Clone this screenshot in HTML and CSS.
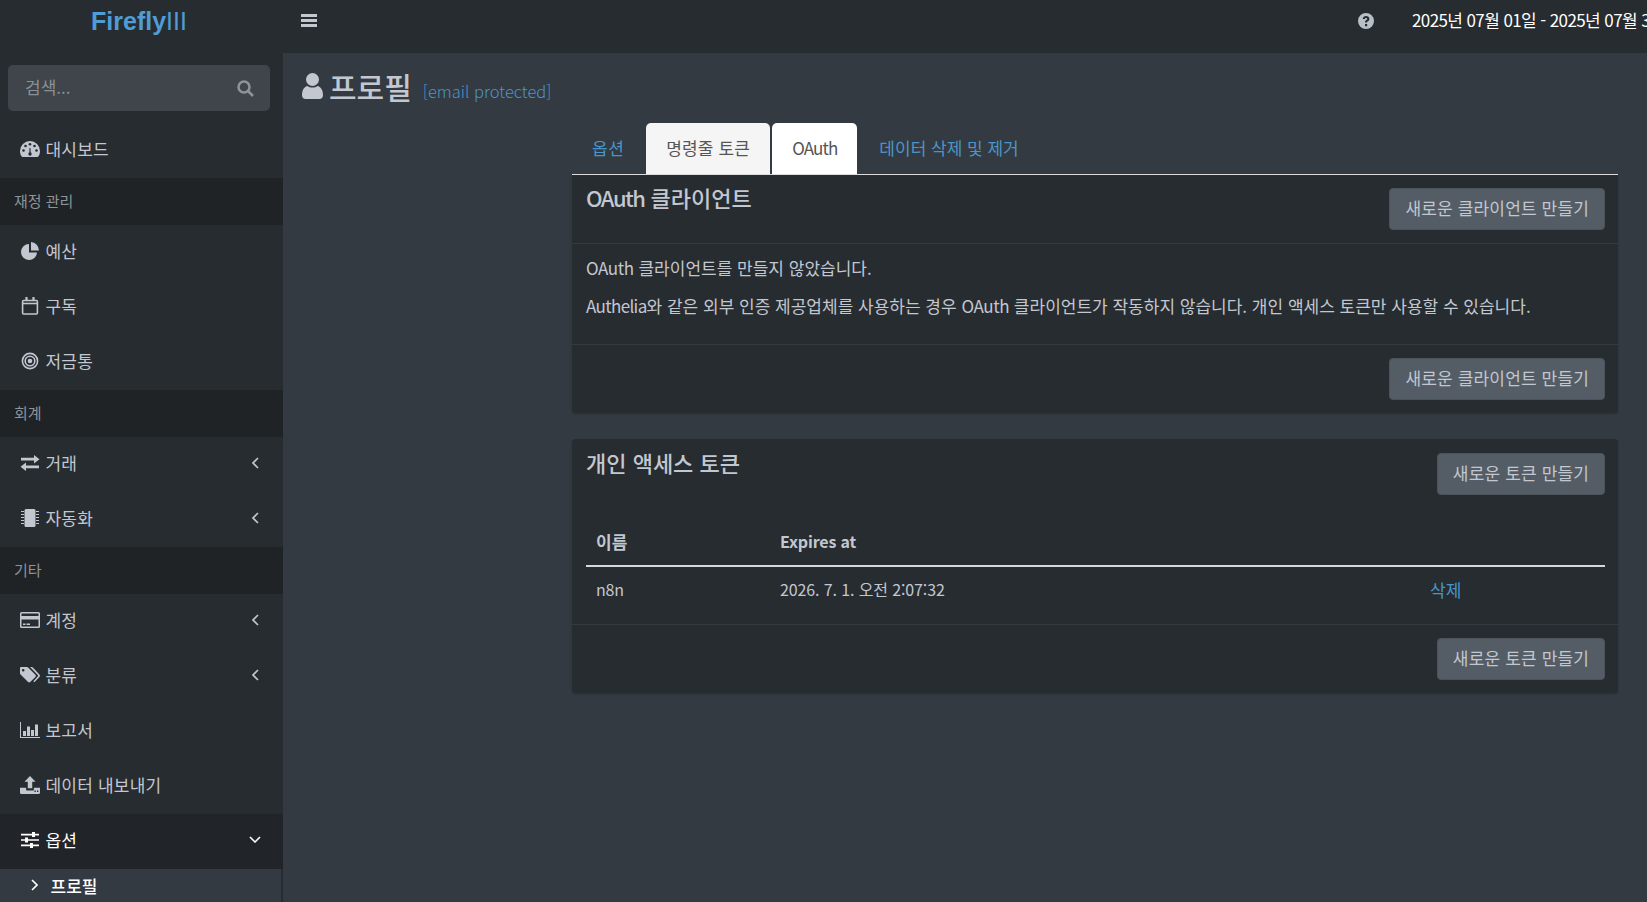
FILE: index.html
```html
<!DOCTYPE html>
<html lang="ko">
<head>
<meta charset="utf-8">
<title>프로필</title>
<link rel="stylesheet" href="styles.css">
</head>
<body>
<div class="app">
  <div class="logo"><b>Firefly</b><span>III</span></div>
  <header class="topbar">
    <svg class="ic-bars" viewBox="0 0 16 13"><path d="M0 0h16v3H0zM0 5h16v3H0zM0 10h16v3H0z"/></svg>
    <svg class="ic-help" viewBox="0 0 16 16"><path fill-rule="evenodd" d="M8 0a8 8 0 1 0 0 16A8 8 0 0 0 8 0zM7 11h2.200v2.200H7zM4.700 6C4.900 4 6.300 3 8.100 3c1.800 0 3.300 1.100 3.300 2.900 0 1.300-.8 1.900-1.500 2.400-.6.400-.8.600-.8 1.300H7c0-1.300.4-1.900 1.200-2.500.6-.4 1-.6 1-1.200 0-.6-.5-1-1.100-1-.7 0-1.200.4-1.300 1.100z"/></svg>
    <div class="daterange">2025년 07월 01일 - 2025년 07월 31일</div>
  </header>

  <aside class="sidebar">
    <div class="search">
      <span>검색...</span>
      <svg class="ic-search" viewBox="0 0 17 17"><circle cx="7" cy="7" r="5.500"/><path d="M11 11l5 5"/></svg>
    </div>
    <nav>
      <a class="item">
        <svg class="ico" viewBox="0 0 20 16"><path d="M10 0A10 10 0 0 0 0 10c0 2.200.6 3.900 1.500 5.300.3.500.7.700 1.200.7h14.600c.5 0 .9-.2 1.200-.7.900-1.400 1.500-3.100 1.500-5.300A10 10 0 0 0 10 0z"/><g class="holes"><circle cx="3.500" cy="9.500" r="1.300"/><circle cx="5.500" cy="5" r="1.300"/><circle cx="10" cy="3.200" r="1.300"/><circle cx="14.500" cy="5" r="1.300"/><circle cx="16.500" cy="9.500" r="1.300"/><circle cx="10" cy="13" r="1.700"/><path d="M9.300 13l.2-6h1l.2 6z"/></g></svg>
        <span>대시보드</span>
      </a>
      <div class="section">재정 관리</div>
      <a class="item">
        <svg class="ico" viewBox="0 0 18 18"><path d="M8 2a8 8 0 1 0 8 8.500H8z"/><path d="M10 0v8.500h8A8.500 8.500 0 0 0 10 0z"/></svg>
        <span>예산</span>
      </a>
      <a class="item">
        <svg class="ico ico-line" viewBox="0 0 18 18"><rect x="1.600" y="3.500" width="14.800" height="13.500" rx="1"/><path d="M1.600 6.500h14.800"/><path class="tick" d="M5.500 0v4M12.500 0v4"/></svg>
        <span>구독</span>
      </a>
      <a class="item">
        <svg class="ico ico-line" viewBox="0 0 18 18"><circle cx="9" cy="9" r="7.600"/><circle cx="9" cy="9" r="4.800"/><circle class="solid" cx="9" cy="9" r="2.300"/></svg>
        <span>저금통</span>
      </a>
      <div class="section">회계</div>
      <a class="item has-tree">
        <svg class="ico" viewBox="0 0 20 16"><path d="M14 0l5.500 4.200L14 8.400V5.600H1V2.800h13zM6 7.600v2.800h13v2.800H6V16L.5 11.800z"/></svg>
        <span>거래</span>
        <svg class="chev" viewBox="0 0 7 12"><path d="M6 1L1 6l5 5"/></svg>
      </a>
      <a class="item has-tree">
        <svg class="ico" viewBox="0 0 18 18"><rect x="3.500" y="0" width="11" height="18" rx="1.500"/><path class="pins" d="M0 2.500h3M0 5.500h3M0 8.500h3M0 11.500h3M0 14.500h3M15 2.500h3M15 5.500h3M15 8.500h3M15 11.500h3M15 14.500h3"/></svg>
        <span>자동화</span>
        <svg class="chev" viewBox="0 0 7 12"><path d="M6 1L1 6l5 5"/></svg>
      </a>
      <div class="section">기타</div>
      <a class="item has-tree">
        <svg class="ico" viewBox="0 0 20 16"><path fill-rule="evenodd" d="M1.500 0h17A1.500 1.500 0 0 1 20 1.500v13a1.500 1.500 0 0 1-1.500 1.500h-17A1.500 1.500 0 0 1 0 14.500v-13A1.500 1.500 0 0 1 1.500 0zM1.500 7.500v7h17v-7zM1.500 1.500V4h17V1.500zM3 11.500h2.500V13H3zM6.500 11.500H10V13H6.500z"/></svg>
        <span>계정</span>
        <svg class="chev" viewBox="0 0 7 12"><path d="M6 1L1 6l5 5"/></svg>
      </a>
      <a class="item has-tree">
        <svg class="ico" viewBox="0 0 20 16"><path fill-rule="evenodd" d="M0 1.200C0 .5.500 0 1.200 0h5.600c.5 0 1 .2 1.300.5l7.300 7.300c.6.600.6 1.500 0 2.100l-5.200 5.200c-.6.600-1.500.6-2.100 0L.8 7.800C.3 7.400 0 6.900 0 6.300zM3.200 2a1.300 1.300 0 1 0 0 2.600 1.300 1.300 0 0 0 0-2.600z"/><path d="M10 0h1.700c.4 0 .9.200 1.200.5l6.500 6.900c.8.800.8 1.900 0 2.600l-5 5.300-1-1 4.300-4.700c.5-.5.500-1.100 0-1.600z"/></svg>
        <span>분류</span>
        <svg class="chev" viewBox="0 0 7 12"><path d="M6 1L1 6l5 5"/></svg>
      </a>
      <a class="item">
        <svg class="ico" viewBox="0 0 20 16"><path d="M0 0h1v15h19v1H0z"/><path d="M3 9h3v5H3zM7 4.500h3V14H7zM11 8h3v6h-3zM15 2.500h3V14h-3z"/></svg>
        <span>보고서</span>
      </a>
      <a class="item">
        <svg class="ico" viewBox="0 0 18 16"><path d="M9 0l5 5h-3v6H7V5H4z"/><path fill-rule="evenodd" d="M0 10.500h5.500V12c0 .5.400 1 1 1h5c.6 0 1-.5 1-1v-1.500H18V15c0 .6-.4 1-1 1H1c-.6 0-1-.4-1-1zM13 13v1.200h1.200V13zM15.300 13v1.200h1.200V13z"/></svg>
        <span>데이터 내보내기</span>
      </a>
      <a class="item is-open">
        <svg class="ico ico-small" viewBox="0 0 18 16"><path d="M0 1.800h18v1.600H0zM0 7.200h18v1.600H0zM0 12.600h18v1.600H0z"/><path d="M11 0h3v5h-3zM4 5.500h3v5H4zM9 11h3v5H9z"/></svg>
        <span>옵션</span>
        <svg class="chev chev-down" viewBox="0 0 12 7"><path d="M1 1l5 5 5-5"/></svg>
      </a>
      <a class="subitem">
        <svg class="chev-right" viewBox="0 0 7 12"><path d="M1 1l5 5-5 5"/></svg>
        <span>프로필</span>
      </a>
    </nav>
  </aside>

  <main class="main">
    <div class="page-title">
      <svg class="ic-user" viewBox="0 0 21 26"><circle cx="10.500" cy="6.500" r="6.500"/><path d="M0 22c0-5 2.500-8.500 5.500-9 1.400 1 3 1.500 5 1.500s3.600-.5 5-1.500c3 .5 5.500 4 5.500 9 0 2.500-1.500 4-3.500 4h-14C1.500 26 0 24.500 0 22z"/></svg>
      <h1>프로필</h1>
      <a class="email">[email protected]</a>
    </div>
    <div class="content">
      <ul class="tabs">
        <li class="tab tab-short">옵션</li>
        <li class="tab tab-hover">명령줄 토큰</li>
        <li class="tab tab-active">OAuth</li>
        <li class="tab">데이터 삭제 및 제거</li>
      </ul>

      <section class="card card-first">
        <div class="card-head bordered">
          <h3><span class="latin-title">OAuth</span> 클라이언트</h3>
          <button class="btn">새로운 클라이언트 만들기</button>
        </div>
        <div class="card-body">
          <p><span class="latin">OAuth</span> 클라이언트를 만들지 않았습니다.</p>
          <p><span class="latin-wide">Authelia</span>와 같은 외부 인증 제공업체를 사용하는 경우 <span class="latin">OAuth</span> 클라이언트가 작동하지 않습니다. 개인 액세스 토큰만 사용할 수 있습니다.</p>
        </div>
        <div class="card-foot">
          <button class="btn">새로운 클라이언트 만들기</button>
        </div>
      </section>

      <section class="card">
        <div class="card-head card-head-2">
          <h3>개인 액세스 토큰</h3>
          <button class="btn">새로운 토큰 만들기</button>
        </div>
        <div class="table-wrap">
          <table>
            <thead>
              <tr><th class="col-name">이름</th><th class="col-exp">Expires at</th><th></th></tr>
            </thead>
            <tbody>
              <tr><td class="small">n8n</td><td class="date">2026. 7. 1. 오전 2:07:32</td><td><a class="link">삭제</a></td></tr>
            </tbody>
          </table>
        </div>
        <div class="card-foot">
          <button class="btn">새로운 토큰 만들기</button>
        </div>
      </section>
    </div>
  </main>
</div>
</body>
</html>
```

FILE: styles.css
```css
* { box-sizing: border-box; }
html, body { margin: 0; height: 100%; overflow: hidden; }
body {
  font-family: "Noto Sans CJK KR", "Noto Sans", sans-serif;
  font-size: 17px;
  color: #c2c7d0;
  background: #343a42;
}
.app {
  display: grid;
  grid-template-columns: 283px 1fr;
  grid-template-rows: 53px 1fr;
  height: 902px;
  overflow: hidden;
}
.logo {
  background: #272c30;
  display: flex;
  justify-content: center;
  padding: 5px 5px 0 0;
  font-family: "Liberation Sans", sans-serif;
  font-size: 25px;
  line-height: 32px;
  color: #4f9cd6;
}
.logo b { font-weight: 700; }
.logo span { font-weight: 400; }
.topbar {
  background: #272c30;
  display: flex;
  align-items: center;
  padding: 0 0 12px 18px;
  overflow: hidden;
  min-width: 0;
}
.ic-bars { width: 16px; height: 13px; fill: #c2c7d0; flex: none; }
.ic-help { width: 16px; height: 16px; fill: #b8bfc6; margin-left: auto; flex: none; }
.daterange {
  flex: 0 0 235px;
  min-width: 0;
  margin-left: 38px;
  padding-bottom: 2px;
  color: #fff;
  white-space: nowrap;
  line-height: 24px;
  letter-spacing: -.6px;
}
.sidebar { background: #272c30; padding-top: 12px; overflow: hidden; }
.search {
  margin: 0 13px 12px 8px;
  height: 46px;
  background: #3f454b;
  border-radius: 5px;
  display: flex;
  align-items: center;
  justify-content: space-between;
  padding: 0 16px 4px 17px;
  color: #8b9095;
}
.ic-search { width: 17px; height: 17px; fill: none; stroke: #8f9499; stroke-width: 2.500; margin-top: 4px; }
.item {
  display: flex;
  align-items: center;
  height: 55px;
  padding: 0 24px 4px 20px;
  letter-spacing: .2px;
}
.ico { width: 20px; height: 18px; fill: #c2c7d0; flex: none; margin-right: 5.500px; }
.ico-small { width: 18px; margin: 0 6.500px 0 1px; }
.ico .holes { fill: #272c30; }
.ico .pins { stroke: #c2c7d0; stroke-width: 1; fill: none; }
.ico-line { fill: none; stroke: #c2c7d0; stroke-width: 1.600; }
.ico-line .solid { fill: #c2c7d0; stroke: none; }
.ico-line .tick { stroke-width: 2.200; }
.chev { width: 7px; height: 12px; margin-left: auto; fill: none; stroke: #c2c7d0; stroke-width: 1.600; flex: none; }
.chev-down { width: 12px; height: 7px; margin-right: -2px; }
.section {
  height: 47px;
  background: #1f2326;
  color: #8e9499;
  font-size: 15px;
  line-height: 46px;
  padding-left: 14px;
}
.is-open { background: #212529; color: #fff; }
.is-open .ico { fill: #fff; }
.is-open .chev { stroke: #fff; }
.subitem {
  display: flex;
  align-items: center;
  height: 34px;
  width: 281px;
  background: #343a42;
  color: #fff;
  padding: 0 0 2px 31px;
  font-weight: 500;
}
.chev-right { width: 7px; height: 12px; fill: none; stroke: #fff; stroke-width: 1.600; margin-right: 12.500px; flex: none; }
.main { min-width: 0; overflow: hidden; }
.page-title {
  height: 70px;
  display: flex;
  align-items: center;
  padding: 0 0 4px 19px;
}
.ic-user { width: 21px; height: 26px; fill: #c2c7d0; flex: none; margin-right: 6px; }
.page-title h1 {
  margin: 0;
  font-size: 30px;
  font-weight: 500;
  line-height: 36px;
  color: #c2c7d0;
}
.email {
  margin: 9px 0 0 11px;
  font-size: 16.500px;
  font-weight: 300;
  color: #4a96c8;
}
.content { padding: 0 29px 0 289px; }
.tabs {
  list-style: none;
  margin: 0;
  padding: 0;
  display: flex;
  height: 52px;
  border-bottom: 1px solid #ddd;
}
.tab {
  padding: 0 20px;
  margin-right: 2px;
  height: 51px;
  line-height: 50px;
  color: #4a96c8;
  border-radius: 5px 5px 0 0;
}
.tab-short { letter-spacing: .5px; }
.tab-hover { background: #f5f5f5; color: #555; letter-spacing: .15px; }
.tab-active { background: #fff; color: #555; letter-spacing: -.9px; }
.card {
  background: #272c30;
  border-radius: 4px;
  margin-bottom: 26px;
  box-shadow: 0 1px 2px rgba(0, 0, 0, .2);
}
.card-first { border-radius: 0 0 4px 4px; }
.card-head {
  display: flex;
  justify-content: space-between;
  align-items: flex-start;
  padding: 13px 13px 13px 14px;
}
.card-head-2 { padding-top: 14px; }
.card-head.bordered { border-bottom: 1px solid #343a40; }
.card-head h3 {
  margin: 0;
  font-size: 22px;
  font-weight: 500;
  line-height: 18px;
  color: #c2c7d0;
}
.latin-title { letter-spacing: -1.500px; }
.latin { letter-spacing: -.4px; }
.latin-wide { letter-spacing: -.65px; }
.btn {
  height: 42px;
  padding: 0 15px 3px;
  background: #545d66;
  border: 1px solid #4b535b;
  border-radius: 4px;
  font: inherit;
  letter-spacing: .15px;
  color: #c2c7d0;
  flex: none;
}
.card-body { padding: 12px 14px 12px; }
.card-body p { margin: 0 0 14px; line-height: 24px; }
.card-foot {
  display: flex;
  justify-content: flex-end;
  padding: 13px;
  border-top: 1px solid #343a40;
}
.table-wrap { padding: 9px 13px 11px 14px; }
table { width: 100%; border-collapse: collapse; table-layout: fixed; }
th {
  text-align: left;
  font-weight: 700;
  height: 49px;
  padding: 0 10px;
  border-bottom: 2px solid #d5d9dd;
}
td { height: 47px; padding: 0 10px 2px; }
.col-name { width: 184px; }
.col-exp { width: 650px; font-size: 16px; letter-spacing: -.15px; }
.small { font-size: 16px; letter-spacing: -.2px; }
.date { font-size: 16px; letter-spacing: -.12px; }
.link { color: #4a96c8; }
```
